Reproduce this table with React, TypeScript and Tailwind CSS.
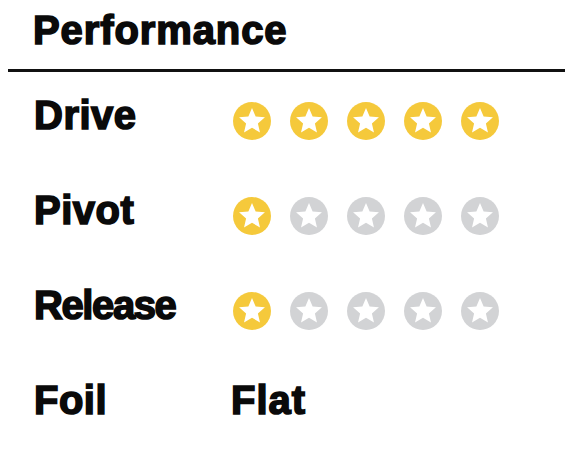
const YELLOW = "#f5c93b";
const GREY = "#d2d3d5";

function starPoints(cx: number, cy: number, outer: number, inner: number) {
  const pts: string[] = [];
  for (let i = 0; i < 10; i++) {
    const r = i % 2 === 0 ? outer : inner;
    const a = (Math.PI / 5) * i - Math.PI / 2;
    pts.push(`${(cx + r * Math.cos(a)).toFixed(2)},${(cy + r * Math.sin(a)).toFixed(2)}`);
  }
  return pts.join(" ");
}

function StarBadge({ on }: { on: boolean }) {
  return (
    <svg width="38" height="38" viewBox="0 0 38 38" className="shrink-0">
      <circle cx="19" cy="19" r="19" fill={on ? YELLOW : GREY} />
      <polygon points={starPoints(19, 19.5, 13.6, 6.2)} fill="#ffffff" />
    </svg>
  );
}

function Rating({ value }: { value: number }) {
  return (
    <div className="flex gap-[19px] mt-[7px]">
      {[0, 1, 2, 3, 4].map((i) => (
        <StarBadge key={i} on={i < value} />
      ))}
    </div>
  );
}

type RowProps = {
  label: string;
  children: React.ReactNode;
  tight?: boolean;
};

function Row({ label, children, tight }: RowProps) {
  return (
    <div className="flex items-start h-[40px]">
      <div
        className={`w-[199px] text-[40px] leading-[40px] font-bold text-[#0a0a0a] [-webkit-text-stroke:1.6px_#0a0a0a] ${
          tight ? "tracking-[-1.4px]" : "tracking-[0.5px]"
        }`}
      >
        {label}
      </div>
      {children}
    </div>
  );
}

export default function App() {
  return (
    <div
      className="w-[573px] h-[462px] overflow-hidden bg-white"
      style={{ fontFamily: '"Liberation Sans", Arial, sans-serif' }}
    >
      <h1 className="pt-[10px] pl-[33px] text-[40px] leading-[40px] font-bold tracking-[0.9px] text-[#0a0a0a] [-webkit-text-stroke:1.6px_#0a0a0a]">
        Performance
      </h1>
      <div className="mx-[8px] mt-[19px] h-[3px] bg-[#111111]" />
      <div className="flex flex-col gap-[55px] mt-[23px] pl-[34px]">
        <Row label="Drive">
          <Rating value={5} />
        </Row>
        <Row label="Pivot">
          <Rating value={1} />
        </Row>
        <Row label="Release" tight>
          <Rating value={1} />
        </Row>
        <Row label="Foil">
          <div className="-ml-[2px] text-[40px] leading-[40px] font-bold tracking-[1px] text-[#0a0a0a] [-webkit-text-stroke:1.6px_#0a0a0a]">
            Flat
          </div>
        </Row>
      </div>
    </div>
  );
}
